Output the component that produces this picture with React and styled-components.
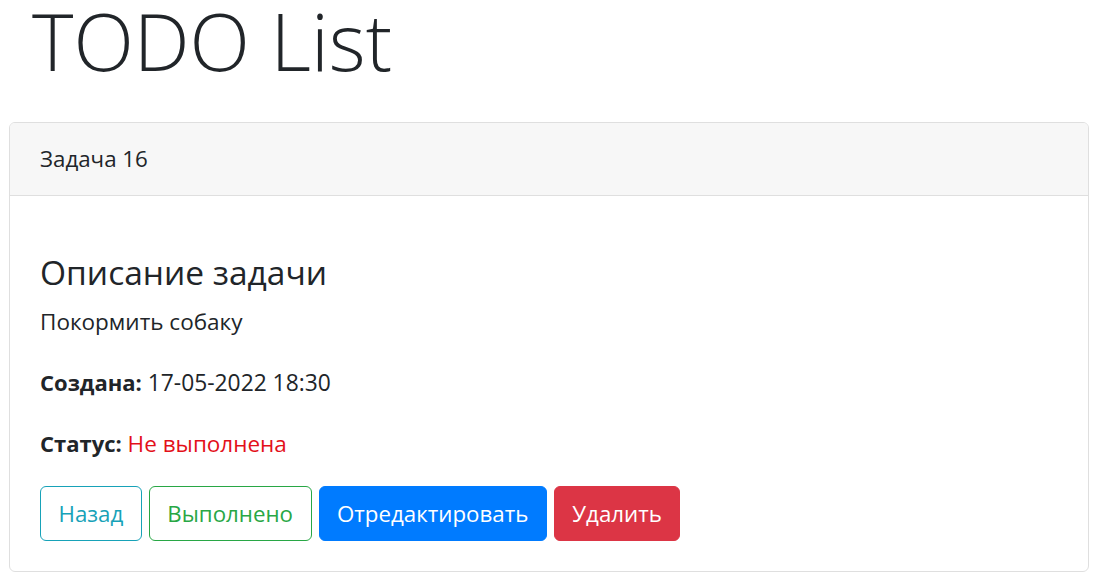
import React from 'react';
import styled, { createGlobalStyle } from 'styled-components';

const GlobalStyle = createGlobalStyle`
  * {
    box-sizing: border-box;
  }

  body {
    margin: 0;
    background: #fff;
    color: #212529;
    font-family: "Open Sans", "Noto Sans", sans-serif;
    font-size: 22.5px;
    line-height: 36px;
  }
`;

const Page = styled.div`
  padding: 0 5px 0 9px;
`;

const Title = styled.h1`
  margin: 0 0 41px;
  padding-left: 23px;
  font-size: 79px;
  font-weight: 300;
  line-height: 81px;
`;

const Card = styled.div`
  display: flex;
  flex-direction: column;
  border: 1px solid #dfdfdf;
  border-radius: 6px;
  background: #fff;
`;

const CardHeader = styled.div`
  padding: 18px 30px;
  background: #f7f7f7;
  border-bottom: 1px solid #dfdfdf;
  border-radius: 5px 5px 0 0;
  font-size: 22.3px;
`;

const CardBody = styled.div`
  padding: 30px;
`;

const Heading = styled.h4`
  margin: 26px 0 12px;
  font-size: 33.5px;
  font-weight: 400;
  line-height: 40px;
`;

const Text = styled.p`
  margin: 0 0 24px;
  white-space: nowrap;
`;

const Label = styled.b`
  font-weight: 700;
  font-size: 22px;
`;

const Value = styled.span`
  font-size: 22.8px;
`;

const Status = styled.span`
  color: ${(p) => (p.done ? '#28a745' : '#e3101a')};
`;

const Buttons = styled.div`
  display: flex;
  gap: 7px;
`;

const palette = {
  info: '#17a2b8',
  success: '#28a745',
  primary: '#007bff',
  danger: '#dc3545',
};

const Button = styled.button`
  padding: 10px 17.5px;
  border: 1px solid ${(p) => palette[p.variant]};
  border-radius: 6px;
  background: ${(p) => (p.outline ? '#fff' : palette[p.variant])};
  color: ${(p) => (p.outline ? palette[p.variant] : '#fff')};
  font-family: inherit;
  font-size: 22.3px;
  line-height: 33px;
  cursor: pointer;
`;

const task = {
  id: 16,
  description: 'Покормить собаку',
  created: '17-05-2022 18:30',
  done: false,
};

export default function App() {
  return (
    <Page>
      <GlobalStyle />
      <Title>TODO List</Title>
      <Card>
        <CardHeader>Задача {task.id}</CardHeader>
        <CardBody>
          <Heading>Описание задачи</Heading>
          <Text>{task.description}</Text>
          <Text>
            <Label>Создана:</Label> <Value>{task.created}</Value>
          </Text>
          <Text>
            <Label>Статус:</Label>{' '}
            <Status done={task.done}>{task.done ? 'Выполнена' : 'Не выполнена'}</Status>
          </Text>
          <Buttons>
            <Button variant="info" outline>Назад</Button>
            <Button variant="success" outline>Выполнено</Button>
            <Button variant="primary">Отредактировать</Button>
            <Button variant="danger">Удалить</Button>
          </Buttons>
        </CardBody>
      </Card>
    </Page>
  );
}
